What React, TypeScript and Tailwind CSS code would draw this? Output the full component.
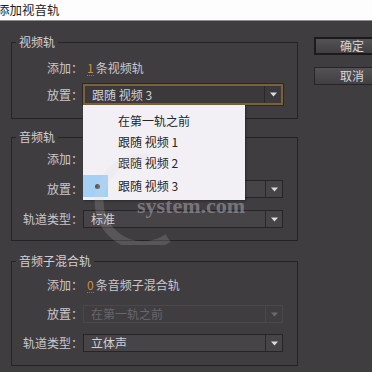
import clsx from "clsx";

const font = "font-['Noto_Sans_CJK_SC','Liberation_Sans',sans-serif]";

function Arrow({ dim }: { dim?: boolean }) {
  return (
    <svg width="7" height="5" viewBox="0 0 7 5">
      <path d="M0 0.5h7L3.5 4.5z" fill={dim ? "#6d6a6e" : "#dcdadd"} />
    </svg>
  );
}

function Select({ text, focused, disabled }: { text?: string; focused?: boolean; disabled?: boolean }) {
  return (
    <div
      className={clsx(
        "flex w-[200px] items-stretch",
        focused
          ? "h-[21px] border-2 border-[#7a6234] bg-[#3b393c] shadow-[0_0_0_1px_#2a2629]"
          : "h-[18px] border",
        !focused && !disabled && "border-[#262427] bg-[#474448]",
        disabled && "border-[#4b484c] bg-[#403d41]"
      )}
    >
      <div
        className={clsx(
          "flex flex-1 items-center pl-[7px] text-[12px]",
          disabled ? "text-[#69666a]" : "text-[#d2d0d3]"
        )}
      >
        {text}
      </div>
      <div
        className={clsx(
          "flex w-[17px] items-center justify-center border-l",
          disabled ? "border-[#4b484c]" : "border-[#2a282b]"
        )}
      >
        <Arrow dim={disabled} />
      </div>
    </div>
  );
}

function Row({ label, children, className }: { label: string; children?: React.ReactNode; className?: string }) {
  return (
    <div className={clsx("flex items-center", className)}>
      <div className="w-[71px] shrink-0 text-right text-[12px] text-[#c9c7ca]">{label}</div>
      {children}
    </div>
  );
}

function Count({ n, text }: { n: string; text: string }) {
  return (
    <div className="flex items-center text-[12px]">
      <span className="ml-[4px] border-b border-dotted border-[#a07a3a] leading-[14px] text-[#c88f3c]">{n}</span>
      <span className="ml-[2px] text-[#c9c7ca]">{text}</span>
    </div>
  );
}

function Group({ title, className, children }: { title: string; className?: string; children: React.ReactNode }) {
  return (
    <fieldset className={clsx("w-[287px] border border-[#252326]", className)}>
      <legend className="ml-[4px] px-[3px] text-[12px] leading-[16px] text-[#d0ced1]">{title}</legend>
      {children}
    </fieldset>
  );
}

export default function App() {
  return (
    <div className={clsx("relative h-[372px] w-[372px] overflow-hidden bg-[#403d41]", font)}>
      <div className="flex h-[21px] items-center border-b border-[#8e8c8f] bg-[#fdfdfd]">
        <span className="ml-[-3px] text-[12.5px] text-[#1e1e1e]">添加视音轨</span>
      </div>

      <div className="flex">
        <div className="w-[298px] pl-[11px] pt-[13px]">
          <Group title="视频轨" className="pb-[13px]">
            <Row label="添加：" className="mt-[9px] h-[18px]">
              <Count n="1" text="条视频轨" />
            </Row>
            <Row label="放置：" className="mt-[7px] h-[21px]">
              <Select text="跟随 视频 3" focused />
            </Row>
          </Group>

          <Group title="音频轨" className="mt-[10px] pb-[12px]">
            {/* the open menu covers the rest of these two rows */}
            <Row label="添加：" className="mt-[5px] h-[18px]" />
            <Row label="放置：" className="mt-[12px] h-[18px]">
              <Select />
            </Row>
            <Row label="轨道类型：" className="mt-[12px] h-[18px]">
              <Select text="标准" />
            </Row>
          </Group>

          <Group title="音频子混合轨" className="mt-[12px] pb-[13px]">
            <Row label="添加：" className="mt-[7px] h-[18px]">
              <Count n="0" text="条音频子混合轨" />
            </Row>
            <Row label="放置：" className="mt-[11px] h-[18px]">
              <Select text="在第一轨之前" disabled />
            </Row>
            <Row label="轨道类型：" className="mt-[11px] h-[18px]">
              <Select text="立体声" />
            </Row>
          </Group>
        </div>

        <div className="ml-[16px] flex flex-col pt-[16px]">
          <button className="flex h-[18px] w-[76px] shrink-0 items-center justify-center border-2 border-[#1c1a1d] bg-gradient-to-b from-[#555256] to-[#423f43] text-[12px] text-[#d8d6d9]">
            确定
          </button>
          <button className="mt-[12px] flex h-[18px] w-[76px] shrink-0 items-center justify-center border border-[#262427] bg-gradient-to-b from-[#555256] to-[#423f43] text-[12px] text-[#d8d6d9]">
            取消
          </button>
        </div>
      </div>

      {/* open dropdown menu */}
      <div className="absolute left-[83px] top-[105px] w-[162px] bg-[#f2f0f5] pb-[3px] pt-[5px] text-[12px] text-[#262626] shadow-[1px_1px_2px_rgba(0,0,0,0.35)]">
        <div className="flex h-[21px] items-center pl-[35px]">在第一轨之前</div>
        <div className="flex h-[21px] items-center pl-[35px]">跟随 视频 1</div>
        <div className="flex h-[21px] items-center pl-[35px]">跟随 视频 2</div>
        <div className="mt-[2px] flex h-[22px] items-center">
          <div className="flex h-[22px] w-[25px] items-center justify-center bg-[#a6d0f3]">
            <div className="ml-[3px] h-[5px] w-[5px] rounded-full bg-[#555]" />
          </div>
          <span className="ml-[10px]">跟随 视频 3</span>
        </div>
      </div>

      {/* watermark */}
      <svg className="pointer-events-none absolute left-[88px] top-[150px]" width="110" height="95" viewBox="0 0 110 95">
        <path d="M60 8 A44 44 0 1 0 80 88" fill="none" stroke="rgba(215,215,220,0.16)" strokeWidth="9" />
      </svg>
      <div className="pointer-events-none absolute left-[137px] top-[195px] font-['Liberation_Serif',serif] text-[22px] font-bold leading-[22px] text-[rgba(170,168,173,0.55)]">
        system.com
      </div>
    </div>
  );
}
